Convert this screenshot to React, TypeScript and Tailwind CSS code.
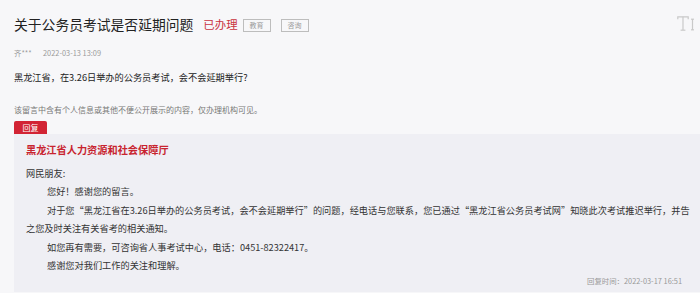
import React from "react";

const FONT = "font-['Microsoft_YaHei','Noto_Sans_CJK_SC',sans-serif]";

function FontSizeIcon() {
  return (
    <svg width="18" height="15" viewBox="0 0 18 15" fill="none" stroke="#c9c9c9" strokeWidth="1.2">
      <path d="M0.8 3.2V0.8H11.2V3.2" />
      <path d="M6 0.8V14" />
      <path d="M3.6 14.2H8.4" />
      <path d="M15.5 3V14" />
      <path d="M14 3.2H17" />
      <path d="M14 13.8H17" />
    </svg>
  );
}

function Tag({ label }: { label: string }) {
  return (
    <span className="flex h-[13px] w-[28px] items-center justify-center border border-[#bdbdbd] text-[7px] leading-none text-[#9a9a9a]">
      {label}
    </span>
  );
}

export default function App() {
  return (
    <div className={`h-[293px] w-[700px] overflow-hidden bg-[#f7f7f9] ${FONT}`}>
      <div className="flex h-[22px] items-center pl-[14px] pr-[5px] mt-[14px]">
        <h1 className="text-[13.8px] leading-none font-normal text-[#222]">关于公务员考试是否延期问题</h1>
        <span className="ml-[10px] text-[11.4px] leading-none text-[#c9333f]">已办理</span>
        <div className="ml-[5px] flex gap-[10px]">
          <Tag label="教育" />
          <Tag label="咨询" />
        </div>
        <div className="ml-auto -mt-[3px]">
          <FontSizeIcon />
        </div>
      </div>

      <div className="mt-[12px] flex h-[10px] items-center pl-[14px] text-[7.4px] leading-none text-[#9b9b9b]">
        <span className="w-[29px]">齐***</span>
        <span>2022-03-13 13:09</span>
      </div>

      <p className="mt-[14px] h-[10px] pl-[14px] text-[9.2px] leading-[10px] text-[#222]">
        黑龙江省，在3.26日举办的公务员考试，会不会延期举行?
      </p>

      <p className="mt-[23px] h-[10px] pl-[14px] text-[8px] leading-[10px] text-[#777]">
        该留言中含有个人信息或其他不便公开展示的内容，仅办理机构可见。
      </p>

      <div className="ml-[14px] mt-[6px] flex h-[13px] w-[33px] items-center justify-center rounded-t-[2px] bg-[#d22434] text-[8px] leading-none text-white">
        回复
      </div>

      <div className="ml-[14px] bg-[#efeff4] pl-[12px] pr-[6px] pt-[10px] pb-[6px]">
        <h2 className="text-[10.2px] leading-[12px] font-bold text-[#c8242f]">黑龙江省人力资源和社会保障厅</h2>
        <div className="mt-[8px] text-[9.2px] leading-[18.4px] text-[#333]">
          <p>网民朋友:</p>
          <p className="indent-[21px]">您好！感谢您的留言。</p>
          <p className="indent-[21px]">
            对于您“黑龙江省在3.26日举办的公务员考试，会不会延期举行”的问题，经电话与您联系，您已通过“黑龙江省公务员考试网”知晓此次考试推迟举行，并告之您及时关注有关省考的相关通知。
          </p>
          <p className="indent-[21px]">如您再有需要，可咨询省人事考试中心，电话：0451-82322417。</p>
          <p className="indent-[21px]">感谢您对我们工作的关注和理解。</p>
        </div>
        <p className="mt-[2px] pr-[12px] text-right text-[7.4px] leading-[10px] text-[#999]">
          回复时间：2022-03-17 16:51
        </p>
      </div>
    </div>
  );
}
